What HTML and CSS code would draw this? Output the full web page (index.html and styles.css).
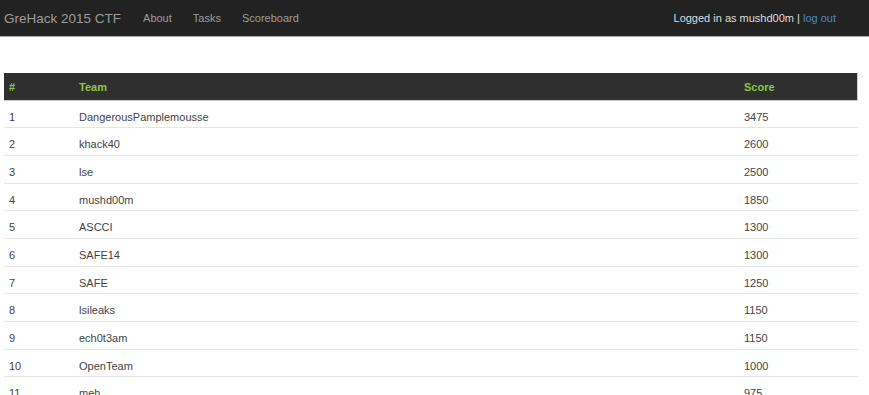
FILE: index.html
```html
<!DOCTYPE html>
<html lang="en">

<head>
    <meta charset="UTF-8">
    <title>GreHack 2015 CTF - Scoreboard</title>
    <link rel="stylesheet" href="styles.css">
</head>

<body>

    <div class="navbar">
        <div class="nav-left">
            <a class="brand" href="#">GreHack 2015 CTF</a>
            <a class="nav-link" href="#">About</a>
            <a class="nav-link" href="#">Tasks</a>
            <a class="nav-link" href="#">Scoreboard</a>
        </div>
        <div class="nav-right">
            Logged in as mushd00m | <a class="logout" href="#">log out</a>
        </div>
    </div>

    <div class="container">
        <table class="scoreboard">
            <thead>
                <tr>
                    <th class="col-rank">#</th>
                    <th class="col-team">Team</th>
                    <th class="col-score">Score</th>
                </tr>
            </thead>
            <tbody>
                <tr><td>1</td><td>DangerousPamplemousse</td><td>3475</td></tr>
                <tr><td>2</td><td>khack40</td><td>2600</td></tr>
                <tr><td>3</td><td>lse</td><td>2500</td></tr>
                <tr><td>4</td><td>mushd00m</td><td>1850</td></tr>
                <tr><td>5</td><td>ASCCI</td><td>1300</td></tr>
                <tr><td>6</td><td>SAFE14</td><td>1300</td></tr>
                <tr><td>7</td><td>SAFE</td><td>1250</td></tr>
                <tr><td>8</td><td>lsileaks</td><td>1150</td></tr>
                <tr><td>9</td><td>ech0t3am</td><td>1150</td></tr>
                <tr><td>10</td><td>OpenTeam</td><td>1000</td></tr>
                <tr><td>11</td><td>meh</td><td>975</td></tr>
                <tr><td>12</td><td>w00t</td><td>900</td></tr>
            </tbody>
        </table>
    </div>

</body>
</html>
```

FILE: styles.css
```css
body {
    margin: 0;
    font-family: "Liberation Sans", Arial, sans-serif;
    font-size: 11px;
    color: #444;
    background-color: #fff;
}

a {
    text-decoration: none;
}

.navbar {
    display: flex;
    justify-content: space-between;
    align-items: center;
    height: 37px;
    padding: 0 33px 0 4px;
    background-color: #222;
    border-bottom: 1px solid #a8a8a8;
    box-sizing: border-box;
}

.nav-left {
    display: flex;
    align-items: center;
}

.brand {
    font-size: 13.5px;
    color: #9d9d9d;
    margin-right: 22px;
}

.nav-link {
    font-size: 11px;
    color: #9d9d9d;
    margin-right: 21px;
}

.nav-right {
    font-size: 11px;
    color: #ddd;
}

.logout {
    color: #428bca;
}

.container {
    padding: 36px 11px 0 4px;
}

.scoreboard {
    width: 100%;
    border-collapse: collapse;
}

.scoreboard th {
    text-align: left;
    font-weight: bold;
    color: #8dc63f;
    background-color: #2f2f2f;
    padding: 6px 5px 4px;
    line-height: 16.67px;
    border-bottom: 1px solid #ccc;
}

.scoreboard th:last-child {
    border-right: 1px solid #ccc;
}

.scoreboard td {
    padding: 8px 5px 2px;
    line-height: 16.67px;
    border-top: 1px solid #e6e6e6;
}

.scoreboard tbody tr:first-child td {
    border-top: none;
}

.col-rank {
    width: 60px;
}

.col-score {
    width: 108px;
}
```
